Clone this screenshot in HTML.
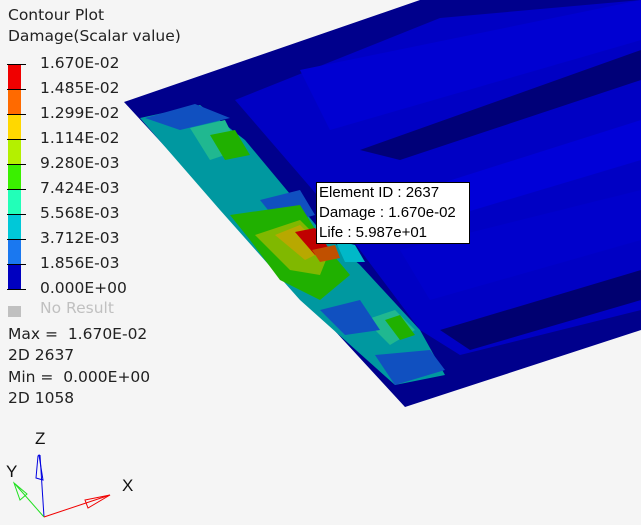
<!DOCTYPE html><html><head><style>
body{margin:0;width:641px;height:525px;background:#f5f5f5;overflow:hidden;position:relative;font-family:"DejaVu Sans","Liberation Sans",sans-serif;color:#222}
.t{position:absolute;font-size:15.5px;white-space:nowrap}
.tip{position:absolute;left:316px;top:182px;width:154px;height:62px;background:#fff;border:1px solid #000;font-family:"Liberation Sans",sans-serif;font-size:15px;line-height:20px;padding-left:2px;box-sizing:border-box;color:#000}
</style></head><body>
<svg width="641" height="525" style="position:absolute;left:0;top:0">
<polygon points="124,102 420,0 641,0 641,330 405,407" fill="#00008c"/>
<polygon points="235,100 440,18 641,0 641,310 460,355 420,330 330,210" fill="#0000c4"/>
<polygon points="300,70 641,0 641,40 330,130" fill="#0000d2"/>
<polygon points="360,150 641,50 641,80 400,160" fill="#000078"/>
<polygon points="420,190 641,120 641,160 440,220" fill="#0000d8"/>
<polygon points="440,330 641,270 641,300 470,350" fill="#000070"/>
<polygon points="400,250 641,190 641,240 430,300" fill="#0000cc"/>
<polygon points="140,118 200,105 245,140 270,170 320,230 360,265 420,330 445,375 395,385 300,300 220,210" fill="#0098a0"/>
<polygon points="145,118 195,104 230,118 180,130" fill="#1050c0"/>
<polygon points="190,128 225,120 240,150 210,160" fill="#20b890"/>
<polygon points="210,135 235,130 250,155 225,160" fill="#20b000"/>
<polygon points="260,200 300,190 315,215 280,225" fill="#1050c0"/>
<polygon points="230,215 300,205 325,245 350,275 320,300 280,280 250,240" fill="#20b000"/>
<polygon points="255,235 300,220 330,250 320,275 290,270" fill="#80b800"/>
<polygon points="275,235 300,225 325,250 305,260" fill="#b8a800"/>
<polygon points="295,232 315,228 330,250 315,255" fill="#c00000"/>
<polygon points="312,250 335,245 340,258 320,262" fill="#c05000"/>
<polygon points="335,240 355,245 365,262 345,262" fill="#00b8c8"/>
<polygon points="365,320 395,310 415,330 390,345" fill="#20b890"/>
<polygon points="385,320 400,315 415,335 400,340" fill="#20b000"/>
<polygon points="320,310 360,300 380,330 345,335" fill="#1050c0"/>
<polygon points="375,355 430,350 445,370 395,385" fill="#1050c0"/>
</svg>
<div class="t" style="left:8px;top:6px">Contour Plot</div>
<div class="t" style="left:8px;top:27px">Damage(Scalar value)</div>
<svg width="30" height="230" style="position:absolute;left:0;top:60px">
<rect x="8" y="4" width="13" height="25" fill="#f00000"/>
<rect x="8" y="29" width="13" height="25" fill="#ff6a00"/>
<rect x="8" y="54" width="13" height="25" fill="#ffd800"/>
<rect x="8" y="79" width="13" height="25" fill="#b4f000"/>
<rect x="8" y="104" width="13" height="25" fill="#3af000"/>
<rect x="8" y="129" width="13" height="25" fill="#22ffb8"/>
<rect x="8" y="154" width="13" height="25" fill="#00c8d8"/>
<rect x="8" y="179" width="13" height="25" fill="#1a78f0"/>
<rect x="8" y="204" width="13" height="25" fill="#0000c0"/>
<g stroke="#000" stroke-width="1"><line x1="7" x2="26" y1="4.5" y2="4.5"/><line x1="7" x2="26" y1="29.5" y2="29.5"/><line x1="7" x2="26" y1="54.5" y2="54.5"/><line x1="7" x2="26" y1="79.5" y2="79.5"/><line x1="7" x2="26" y1="104.5" y2="104.5"/><line x1="7" x2="26" y1="129.5" y2="129.5"/><line x1="7" x2="26" y1="154.5" y2="154.5"/><line x1="7" x2="26" y1="179.5" y2="179.5"/><line x1="7" x2="26" y1="204.5" y2="204.5"/><line x1="7" x2="26" y1="229.5" y2="229.5"/></g>
</svg>
<div class="t" style="left:40px;top:54px">1.670E-02</div>
<div class="t" style="left:40px;top:79px">1.485E-02</div>
<div class="t" style="left:40px;top:104px">1.299E-02</div>
<div class="t" style="left:40px;top:129px">1.114E-02</div>
<div class="t" style="left:40px;top:154px">9.280E-03</div>
<div class="t" style="left:40px;top:179px">7.424E-03</div>
<div class="t" style="left:40px;top:204px">5.568E-03</div>
<div class="t" style="left:40px;top:229px">3.712E-03</div>
<div class="t" style="left:40px;top:254px">1.856E-03</div>
<div class="t" style="left:40px;top:279px">0.000E+00</div>
<div style="position:absolute;left:8px;top:306px;width:13px;height:11px;background:#c0c0c0"></div>
<div class="t" style="left:40px;top:299px;color:#c0c0c0">No Result</div>
<div class="t" style="left:8px;top:325px">Max =&nbsp; 1.670E-02</div>
<div class="t" style="left:8px;top:346px">2D 2637</div>
<div class="t" style="left:8px;top:368px">Min =&nbsp; 0.000E+00</div>
<div class="t" style="left:8px;top:389px">2D 1058</div>
<div class="tip">Element ID : 2637<br>Damage : 1.670e-02<br>Life : 5.987e+01</div>
<svg width="150" height="105" style="position:absolute;left:0;top:420px">
<g fill="none" stroke-width="1">
<polyline points="44,97 40,35" stroke="#0000e0"/>
<polygon points="38,36 36,58 43,60 39,35" stroke="#0000e0"/>
<polyline points="44,97 15,64" stroke="#20e020"/>
<polygon points="14,63 20,80 27,74" stroke="#20e020"/>
<polyline points="44,97 110,75" stroke="#f00000"/>
<polygon points="110,75 85,80 88,88" stroke="#f00000"/>
</g>
<text x="35" y="24" font-family="Liberation Sans" font-size="17" fill="#111">Z</text>
<text x="6" y="57" font-family="Liberation Sans" font-size="17" fill="#111">Y</text>
<text x="122" y="71" font-family="Liberation Sans" font-size="17" fill="#111">X</text>
</svg>
</body></html>
